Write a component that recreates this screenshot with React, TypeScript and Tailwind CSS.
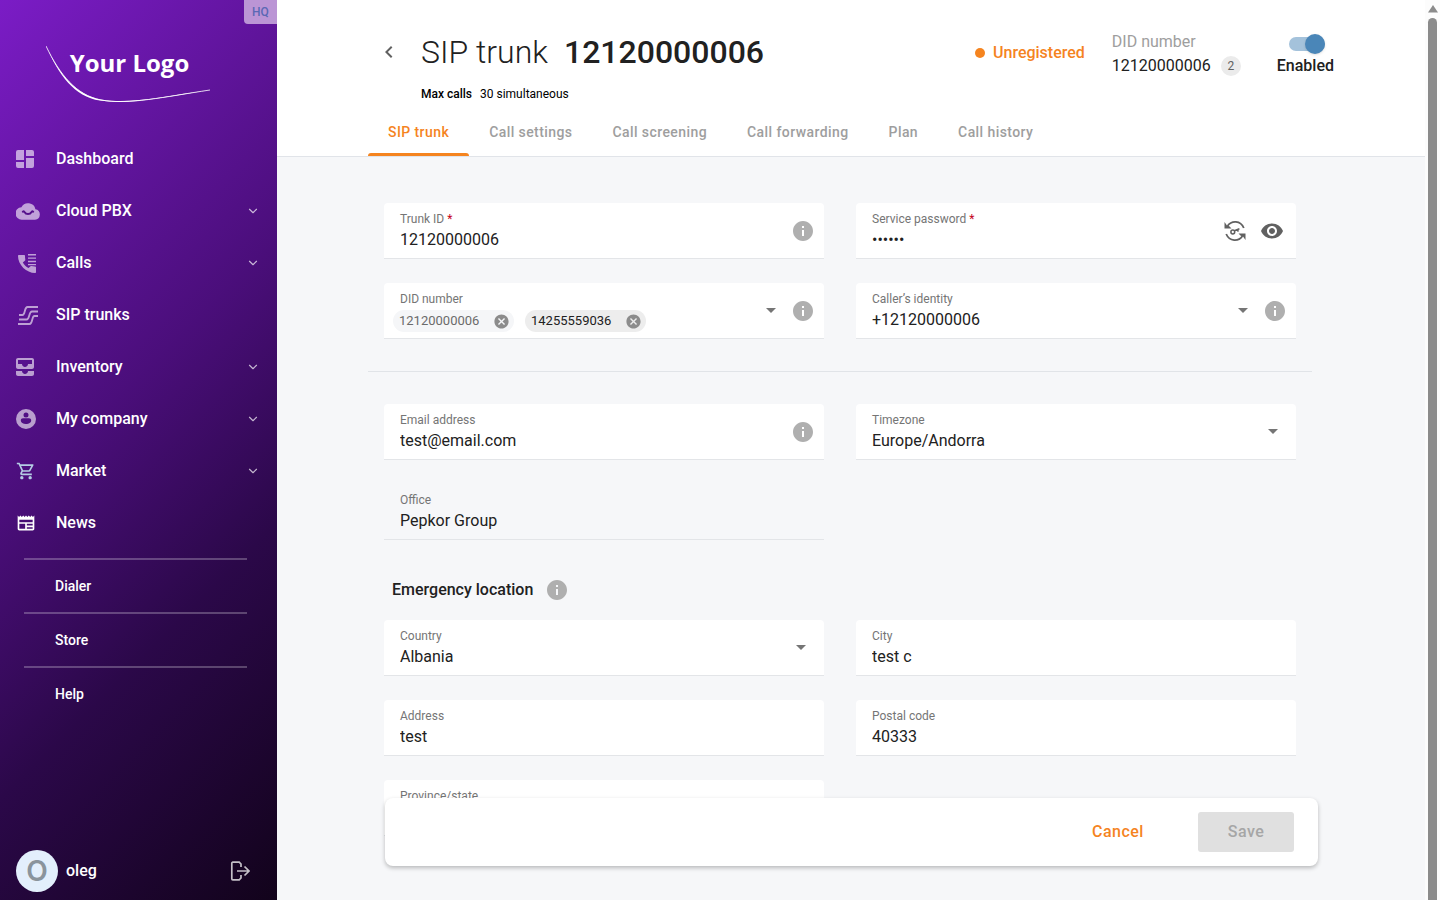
import { useState } from "react"
import type { ReactNode } from "react"
import {
  MdCancel,
  MdChevronLeft,
  MdInfo,
  MdOutlineNewspaper,
  MdOutlineShoppingCart,
  MdVisibility,
} from "react-icons/md"
import { ChevronDown } from "lucide-react"
import clsx from "clsx"

const DashboardIcon = () => (
  <svg width="18" height="18" viewBox="0 0 18 18" fill="currentColor">
    <path d="M2 0h6v10H0V2a2 2 0 0 1 2-2zM10 0h6a2 2 0 0 1 2 2v4h-8zM0 12h8v6H2a2 2 0 0 1-2-2zM10 8h8v8a2 2 0 0 1-2 2h-6z" />
  </svg>
)

const CloudIcon = () => (
  <svg width="24" height="17" viewBox="0 0 24 17">
    <path
      fill="currentColor"
      d="M19.4 6.2A7.5 7.5 0 0 0 5.4 4.3 6.2 6.2 0 0 0 6 16.7h13a5.3 5.3 0 0 0 .4-10.5z"
    />
    <path
      d="M6.800 8.700c1-.8 1.400-.3 1.700.3 1.500 2.800 5.500 2.800 7 0 .3-.6.700-1.100 1.700-.3"
      fill="none"
      stroke="#56118c"
      strokeWidth="2"
      strokeLinecap="round"
    />
  </svg>
)

const CallsIcon = () => (
  <svg width="20" height="20" viewBox="0 0 20 20" fill="currentColor">
    <path d="M4.800 9.500c1.500 2.700 3.200 4.300 5.700 5.600l2-1.800c.3-.3.700-.3 1-.2 1.100.3 2.300.5 3.500.5.600 0 1 .4 1 1V19c0 .6-.4 1-1 1C8.700 20 0 12 0 3c0-.6.4-1 1-1h5c.6 0 1 .4 1 1 0 1.200.1 2.300.3 3.400.1.300 0 .7-.2 1z" />
    <path d="M10 1h8v1.400h-8zM10 4.400h8v1.400h-8zM10 7.800h8v1.400h-8zM10 11h8v1.200h-8z" />
  </svg>
)

const TrunksIcon = () => (
  <svg
    width="20"
    height="19"
    viewBox="0 0 20 19"
    fill="none"
    stroke="currentColor"
    strokeWidth="1.800"
  >
    <path d="M1 9h3.500C7.500 9 6 1 9.500 1H20" />
    <path d="M1 13.500h7.500c3.500 0 2-8 5.500-8h6" />
    <path d="M0 18h11.500c3.500 0 2-8 5-8H20" />
  </svg>
)

const InventoryIcon = () => (
  <svg width="18" height="18" viewBox="3 3 18 18" fill="currentColor">
    <path d="M19 3H5c-1.100 0-2 .9-2 2v7c0 1.100.9 2 2 2h14c1.100 0 2-.9 2-2V5c0-1.100-.9-2-2-2zm0 6h-4c0 1.620-1.380 3-3 3s-3-1.380-3-3H5V5h14v4zm-4 7h6v3c0 1.100-.9 2-2 2H5c-1.100 0-2-.9-2-2v-3h6c0 1.660 1.340 3 3 3s3-1.340 3-3z" />
  </svg>
)

const CompanyIcon = () => (
  <svg width="20" height="20" viewBox="0 0 20 20" fill="currentColor">
    <path
      fillRule="evenodd"
      d="M10 0a10 10 0 1 0 0 20 10 10 0 0 0 0-20zm0 3.400a2.500 2.500 0 1 1 0 5 2.500 2.500 0 0 1 0-5zM7 9.300h6c1.300 0 2.200.9 2.200 2.200 0 2-2.300 3.500-5.200 3.500s-5.200-1.500-5.200-3.500c0-1.300.9-2.200 2.200-2.200z"
    />
  </svg>
)

const LogoutIcon = () => (
  <svg
    width="20"
    height="20"
    viewBox="0 0 20 20"
    fill="none"
    stroke="currentColor"
    strokeWidth="1.700"
  >
    <path d="M11 6V3L9.200 1.200H2.800a1 1 0 0 0-1 1v15.600a1 1 0 0 0 1 1h6.400L11 17v-3" />
    <path d="M7 10h12M14.500 5.500 19 10l-4.500 4.500" />
  </svg>
)

const RegenerateKeyIcon = () => (
  <svg
    width="22"
    height="22"
    viewBox="0 0 22 22"
    fill="none"
    stroke="currentColor"
    strokeWidth="1.800"
  >
    <path d="M3.500 6C7.500.2 16.500.2 19.800 8" />
    <path d="M18.500 16c-4 5.800-13 5.800-16.300-2" />
    <path
      d="M.5 2v6.500H7.500L5.300 6.300 3 5.500zM21.500 20v-6.500h-7l2.200 2.200 2.300.8z"
      fill="currentColor"
      stroke="none"
    />
    <circle cx="8.800" cy="12" r="1.900" strokeWidth="1.500" />
    <path d="m10.400 10.800 5-2M13.500 9.600l.8 2" strokeWidth="1.500" />
  </svg>
)

interface NavItem {
  label: string
  icon: ReactNode
  iconClass: string
  expandable?: boolean
}

const NAV_ITEMS: NavItem[] = [
  { label: "Dashboard", icon: <DashboardIcon />, iconClass: "text-white/60" },
  {
    label: "Cloud PBX",
    icon: <CloudIcon />,
    iconClass: "text-white/60",
    expandable: true,
  },
  {
    label: "Calls",
    icon: <CallsIcon />,
    iconClass: "pl-0.5 text-white/60",
    expandable: true,
  },
  {
    label: "SIP trunks",
    icon: <TrunksIcon />,
    iconClass: "pl-0.5 text-white/60",
  },
  {
    label: "Inventory",
    icon: <InventoryIcon />,
    iconClass: "text-white/60",
    expandable: true,
  },
  {
    label: "My company",
    icon: <CompanyIcon />,
    iconClass: "text-white/60",
    expandable: true,
  },
  {
    label: "Market",
    icon: <MdOutlineShoppingCart size={20} />,
    iconClass: "text-[#b4cde4]",
    expandable: true,
  },
  {
    label: "News",
    icon: <MdOutlineNewspaper size={20} />,
    iconClass: "text-white",
  },
]

const SHORTCUTS = ["Dialer", "Store", "Help"]

const TABS = [
  "SIP trunk",
  "Call settings",
  "Call screening",
  "Call forwarding",
  "Plan",
  "Call history",
]

const Logo = () => (
  <div className="relative ml-[46px] flex h-14 w-[165px] items-start justify-center pt-px">
    <span className="pl-0.5 font-['Open_Sans',sans-serif] text-2xl leading-8 font-bold">
      Your Logo
    </span>
    <svg
      className="absolute inset-0"
      width="165"
      height="56"
      viewBox="0 0 165 56"
      fill="currentColor"
    >
      <path d="M0 0C14 29 30 49 55 53.500c28 5 62-3 109-9.500-48 7.600-82 15-110 10.600C28 50.500 13 29 0 0z" />
      <path
        d="M0 0C14 29 30 49 55 54c28 5 62-3 109-10"
        fill="none"
        stroke="currentColor"
        strokeWidth=".8"
      />
    </svg>
  </div>
)

const Sidebar = () => (
  <aside className="relative flex w-[277px] shrink-0 flex-col bg-[linear-gradient(135deg,#7b1cc6_0%,#4a0e7a_44%,#2b0849_68%,#12031b_100%)] pt-[46px] text-white">
    <span className="absolute top-0 right-0 flex h-6 w-[33px] items-center justify-center rounded-bl bg-[#bb95d5] text-xs font-medium text-[#5b68b4]">
      HQ
    </span>
    <Logo />

    <nav className="mt-[31px]">
      <ul>
        {NAV_ITEMS.map((item) => (
          <li key={item.label}>
            <a
              href="#"
              className="flex h-[52px] items-center pr-[17px] pl-4 font-medium"
            >
              <span className={clsx("w-10", item.iconClass)}>{item.icon}</span>
              <span className="flex-1">{item.label}</span>
              {item.expandable && (
                <ChevronDown size={14} className="text-white/70" />
              )}
            </a>
          </li>
        ))}
      </ul>
      <ul className="mt-[9px] mr-[30px] ml-6">
        {SHORTCUTS.map((label) => (
          <li key={label} className="border-t-2 border-white/25">
            <a
              href="#"
              className="flex h-[52px] items-center pl-[31px] text-sm font-medium"
            >
              {label}
            </a>
          </li>
        ))}
      </ul>
    </nav>

    <div className="mt-auto mb-2 flex items-center pr-[27px] pl-4">
      <span className="flex size-[42px] items-center justify-center rounded-full bg-[#e3effc] font-['Inter',sans-serif] text-[28px] font-semibold text-[#8a949c]">
        O
      </span>
      <span className="ml-2 flex-1 font-medium">oleg</span>
      <button type="button" aria-label="Log out" className="text-white/75">
        <LogoutIcon />
      </button>
    </div>
  </aside>
)

const Arrow = () => (
  <svg
    width="10"
    height="5"
    viewBox="0 0 10 5"
    className="pointer-events-none shrink-0 text-[#757575]"
  >
    <path d="M0 0h10L5 5z" fill="currentColor" />
  </svg>
)

const InfoButton = ({ about }: { about: string }) => (
  <button type="button" aria-label={about} className="text-[#afafaf]">
    <MdInfo size={24} />
  </button>
)

interface FieldProps {
  id: string
  label: string
  value?: string
  kind?: "text" | "password" | "select"
  required?: boolean
  readOnly?: boolean
  info?: boolean
  actions?: ReactNode
  children?: ReactNode
}

const Field = ({
  id,
  label,
  value = "",
  kind = "text",
  required,
  readOnly,
  info,
  actions,
  children,
}: FieldProps) => {
  const isSelect = kind === "select"

  return (
    <div
      className={clsx(
        "flex h-14 items-center rounded-t border-b border-[#e3e5e8] pl-4",
        !readOnly && "bg-white",
        info || actions ? "pr-[9px]" : "pr-[18px]",
      )}
    >
      <div className="flex h-full min-w-0 flex-1 flex-col pt-2">
        <label htmlFor={id} className="text-xs leading-4 text-[#757575]">
          {label}
          {required && <span className="text-[#c4001a]"> *</span>}
        </label>
        {children}
        {!children && isSelect && (
          <select
            id={id}
            defaultValue={value}
            className="h-[26px] w-full appearance-none bg-transparent outline-none"
          >
            <option>{value}</option>
          </select>
        )}
        {!children && !isSelect && (
          <input
            id={id}
            type={kind}
            defaultValue={value}
            readOnly={readOnly}
            className="h-[25px] w-full bg-transparent outline-none"
          />
        )}
      </div>
      {isSelect && <Arrow />}
      {info && (
        <span className="ml-[15px] flex">
          <InfoButton about={`About ${label}`} />
        </span>
      )}
      {actions}
    </div>
  )
}

const Chip = ({ number, locked }: { number: string; locked?: boolean }) => (
  <span
    className={clsx(
      "flex h-[22px] w-[121px] items-center justify-between rounded-full pr-1 pl-1.5 text-[13px]",
      locked ? "bg-[#f5f6f8] text-[#6b6b6b]" : "bg-[#ededed] text-[#212121]",
    )}
  >
    {number}
    <button
      type="button"
      aria-label={`Remove ${number}`}
      className="text-[#8c8c8c]"
    >
      <MdCancel size={17} />
    </button>
  </span>
)

const Header = () => {
  const [activeTab, setActiveTab] = useState(TABS[0])
  const [enabled, setEnabled] = useState(true)

  return (
    <header className="border-b border-[#e1e4e9] bg-white px-[91px] pt-8">
      <div className="flex h-10 items-center">
        <button
          type="button"
          aria-label="Back"
          className="ml-[9px] w-11 text-[#616161]"
        >
          <MdChevronLeft size={24} />
        </button>
        <h1 className="flex flex-1 gap-4 text-[32px] leading-10 font-light">
          SIP trunk <span className="font-medium">12120000006</span>
        </h1>
        <p className="mr-[27px] flex items-center gap-2 pt-px font-medium text-[#f5841f]">
          <span className="size-2.5 rounded-full bg-[#f5841f]" />
          Unregistered
        </p>
        <div className="mr-9 pt-[3px]">
          <p className="text-[#9e9e9e]">DID number</p>
          <p className="flex items-center gap-2.5">
            12120000006
            <span className="flex size-5 items-center justify-center rounded-full bg-[#ebebeb] text-xs text-[#616161]">
              2
            </span>
          </p>
        </div>
        <label className="flex flex-col items-center pt-[7px] font-medium">
          <input
            type="checkbox"
            role="switch"
            checked={enabled}
            onChange={(e) => setEnabled(e.target.checked)}
            className="my-[3px] ml-1 h-3.5 w-9 appearance-none rounded-full bg-gray-300 before:block before:size-5 before:-translate-y-[3px] before:rounded-full before:bg-white before:shadow-sm checked:bg-[#a4c2db] checked:before:translate-x-4 checked:before:bg-[#4a86b8]"
          />
          Enabled
        </label>
      </div>

      <p className="mt-3.5 ml-[53px] flex gap-2 text-xs leading-4 text-black">
        <span className="font-medium">Max calls</span>
        <span>30 simultaneous</span>
      </p>

      <div role="tablist" className="mt-1.5 flex">
        {TABS.map((tab) => (
          <button
            key={tab}
            type="button"
            role="tab"
            aria-selected={tab === activeTab}
            onClick={() => setActiveTab(tab)}
            className="relative h-12 px-5 text-sm font-medium tracking-[0.03em] text-[#9e9e9e] aria-selected:text-[#f5841f]"
          >
            {tab}
            {tab === activeTab && (
              <span className="absolute inset-x-0 bottom-0 h-[3px] rounded-t-sm bg-[#f5841f]" />
            )}
          </button>
        ))}
      </div>
    </header>
  )
}

const TrunkForm = () => (
  <form className="pt-[46px] pr-[113px] pb-32 pl-[91px]">
    <div className="grid grid-cols-2 gap-x-8 gap-y-6 px-4">
      <Field id="trunk-id" label="Trunk ID" value="12120000006" required info />
      <Field
        id="password"
        label="Service password"
        value="secret"
        kind="password"
        required
        actions={
          <span className="mr-[3px] flex items-center gap-3.5 text-[#616161]">
            <button type="button" aria-label="Generate password">
              <RegenerateKeyIcon />
            </button>
            <button type="button" aria-label="Show password">
              <MdVisibility size={24} />
            </button>
          </span>
        }
      />
      <Field id="did" label="DID number" kind="select" info>
        <div className="-ml-[7px] flex h-[25px] items-end gap-[11px]">
          <Chip number="12120000006" locked />
          <Chip number="14255559036" />
          <input
            id="did"
            type="text"
            className="h-[22px] min-w-0 flex-1 bg-transparent text-[13px] outline-none"
          />
        </div>
      </Field>
      <Field
        id="identity"
        label="Caller’s identity"
        value="+12120000006"
        kind="select"
        info
      />
    </div>

    <hr className="my-8 border-[#e1e4e8]" />

    <div className="grid grid-cols-2 gap-x-8 gap-y-6 px-4">
      <Field id="email" label="Email address" value="test@email.com" info />
      <Field
        id="timezone"
        label="Timezone"
        value="Europe/Andorra"
        kind="select"
      />
      <Field id="office" label="Office" value="Pepkor Group" readOnly />
    </div>

    <div className="mt-[38px] mb-[18px] ml-6 flex h-6 items-center gap-3">
      <h2 className="font-medium">Emergency location</h2>
      <InfoButton about="About emergency location" />
    </div>

    <div className="grid grid-cols-2 gap-x-8 gap-y-6 px-4">
      <Field id="country" label="Country" value="Albania" kind="select" />
      <Field id="city" label="City" value="test c" />
      <Field id="address" label="Address" value="test" />
      <Field id="postal" label="Postal code" value="40333" />
      <Field id="province" label="Province/state" />
    </div>
  </form>
)

const App = () => (
  <div className="flex h-screen bg-[#f6f7f9] font-['Roboto',sans-serif] text-base text-[#212121] [&_button]:block [&_svg]:block">
    <Sidebar />
    <div className="relative min-w-0 flex-1">
      <main className="h-full overflow-y-auto [scrollbar-width:none]">
        <Header />
        <TrunkForm />
      </main>
      <div className="absolute right-[107px] bottom-[34px] left-[108px] flex h-[68px] items-center justify-end gap-8 rounded-lg bg-white pr-6 font-medium shadow-[0_2px_4px_rgba(0,0,0,0.25)]">
        <button
          type="button"
          className="h-10 w-24 tracking-[0.03em] text-[#f5841f]"
        >
          Cancel
        </button>
        <button
          type="button"
          disabled
          className="h-10 w-24 rounded-[3px] bg-[#e0e0e0] tracking-[0.03em] text-[#a6a6a6]"
        >
          Save
        </button>
      </div>
    </div>
    <div
      aria-hidden
      className="flex w-[15px] shrink-0 flex-col items-center bg-[#fcfcfc] pt-[5px]"
    >
      <svg width="10" height="8" viewBox="0 0 10 8">
        <path d="M5 0 10 7.500H0z" fill="#8b8b8b" />
      </svg>
      <span className="mt-[5px] w-[9px] flex-1 rounded-t-full bg-[#8b8b8b]" />
    </div>
  </div>
)

export default App
